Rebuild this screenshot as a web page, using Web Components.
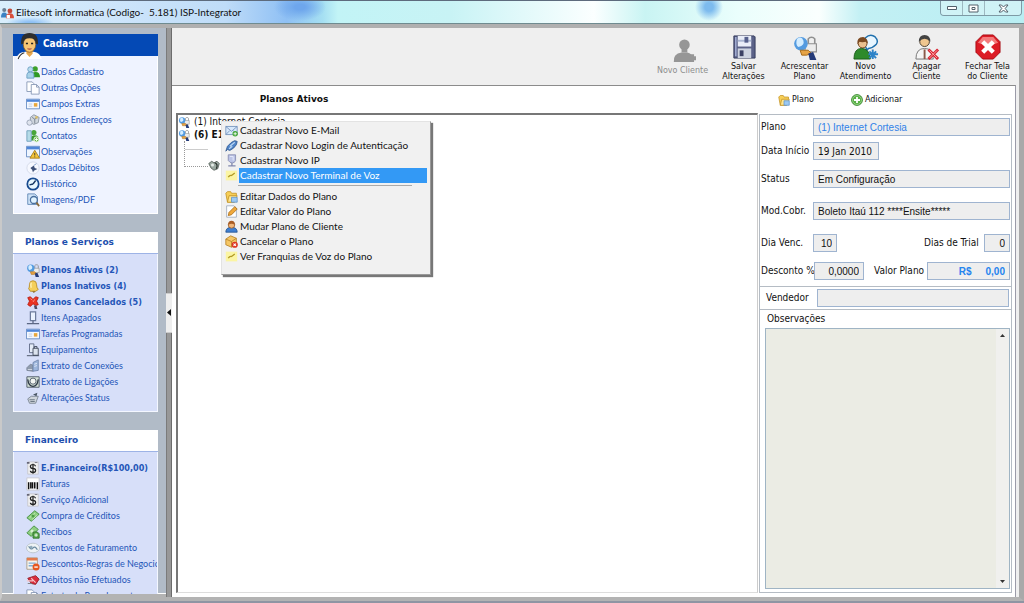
<!DOCTYPE html>
<html lang="pt-BR">
<head>
<meta charset="utf-8">
<title>ISP-Integrator</title>
<style>
html, body { margin: 0; height: 100%; }
body {
  --ui: "DejaVu Sans Condensed", "DejaVu Sans", sans-serif;
  --wide: "DejaVu Sans", sans-serif;
  --menu: Lato, "Liberation Sans", sans-serif;
  --nav: Lato, "Liberation Sans", sans-serif;
  font: 9px/16px var(--ui);
  color: #111;
  overflow: hidden;
}
</style>
</head>
<body>
<app-window heading="Elitesoft informatica (Codigo-&nbsp; 5.181) ISP-Integrator">
  <nav-sidebar slot="sidebar">
    <side-panel heading="Cadastro" primary>
      <nav-item icon="people">Dados Cadastro</nav-item>
      <nav-item icon="pages">Outras Opções</nav-item>
      <nav-item icon="form">Campos Extras</nav-item>
      <nav-item icon="address">Outros Endereços</nav-item>
      <nav-item icon="contacts">Contatos</nav-item>
      <nav-item icon="notes">Observações</nav-item>
      <nav-item icon="debit">Dados Débitos</nav-item>
      <nav-item icon="clock">Histórico</nav-item>
      <nav-item icon="search">Imagens/PDF</nav-item>
    </side-panel>
    <side-panel heading="Planos e Serviços">
      <nav-item icon="plan" bold>Planos Ativos (2)</nav-item>
      <nav-item icon="bell" bold>Planos Inativos (4)</nav-item>
      <nav-item icon="cancelled" bold>Planos Cancelados (5)</nav-item>
      <nav-item icon="device">Itens Apagados</nav-item>
      <nav-item icon="form">Tarefas Programadas</nav-item>
      <nav-item icon="equipment">Equipamentos</nav-item>
      <nav-item icon="connections">Extrato de Conexões</nav-item>
      <nav-item icon="calls">Extrato de Ligações</nav-item>
      <nav-item icon="status">Alterações Status</nav-item>
    </side-panel>
    <side-panel heading="Financeiro">
      <nav-item icon="dollar" bold>E.Financeiro(R$100,00)</nav-item>
      <nav-item icon="barcode">Faturas</nav-item>
      <nav-item icon="dollar">Serviço Adicional</nav-item>
      <nav-item icon="money">Compra de Créditos</nav-item>
      <nav-item icon="receipt">Recibos</nav-item>
      <nav-item icon="events">Eventos de Faturamento</nav-item>
      <nav-item icon="discount">Descontos-Regras de Negocio</nav-item>
      <nav-item icon="unpaid">Débitos não Efetuados</nav-item>
      <nav-item icon="pages">Extrato do Parcelamento</nav-item>
    </side-panel>
  </nav-sidebar>

  <tool-bar slot="toolbar">
    <tool-button icon="newclient" disabled>Novo Cliente</tool-button>
    <tool-button icon="floppy">Salvar<br>Alterações</tool-button>
    <tool-button icon="plan">Acrescentar<br>Plano</tool-button>
    <tool-button icon="support">Novo<br>Atendimento</tool-button>
    <tool-button icon="delclient">Apagar<br>Cliente</tool-button>
    <tool-button icon="stop">Fechar Tela<br>do Cliente</tool-button>
  </tool-bar>

  <plan-tree slot="content" heading="Planos Ativos">
    <tree-node icon="plan">(1) Internet Cortesia</tree-node>
    <tree-node icon="plan" bold>(6) E1</tree-node>
    <context-menu slot="menu">
      <menu-item icon="mail">Cadastrar Novo E-Mail</menu-item>
      <menu-item icon="plug">Cadastrar Novo Login de Autenticação</menu-item>
      <menu-item icon="ip">Cadastrar Novo IP</menu-item>
      <menu-item icon="note" selected>Cadastrar Novo Terminal de Voz</menu-item>
      <menu-divider></menu-divider>
      <menu-item icon="folder">Editar Dados do Plano</menu-item>
      <menu-item icon="pencil">Editar Valor do Plano</menu-item>
      <menu-item icon="user">Mudar Plano de Cliente</menu-item>
      <menu-item icon="box">Cancelar o Plano</menu-item>
      <menu-item icon="note">Ver Franquias de Voz do Plano</menu-item>
    </context-menu>
  </plan-tree>

  <plan-details slot="details"></plan-details>
</app-window>

<script>
const ICONS = {
  app: `<circle cx="4" cy="5" r="2.500" fill="#6a7f95"/><path d="M0 14q0-6 4-6t4 6z" fill="#3b82c4"/><circle cx="11" cy="6" r="3" fill="#c34a3a"/><path d="M6 15q0-6 5-6t5 6z" fill="#d9503c"/><path d="M7 11h4v4H7z" fill="#fff"/>`,
  people: `<circle cx="10.500" cy="4.500" r="3" fill="#3ca02a"/><path d="M6 14q0-6 5-6t5 6z" fill="#2f9a22"/><circle cx="5" cy="5" r="3" fill="#b9dcec" stroke="#6b9fc4"/><path d="M1 15V11q0-3 4-3t4 3v4z" fill="#a8d2e8" stroke="#6b9fc4"/>`,
  pages: `<path d="M1 1h6l2 2v9H1z" fill="#fff" stroke="#8797b5"/><path d="M6 4h6l3 3v8H6z" fill="#fdfdff" stroke="#8797b5"/><path d="M12 4v3h3" fill="none" stroke="#8797b5"/>`,
  form: `<path d="M.5 2.500h15v11H.5z" fill="#f4f8ff" stroke="#5f86bf"/><path d="M1 3h14v2.500H1z" fill="#4f86d8"/><path d="M3 8h4M3 10.500h4" stroke="#b8c8e0"/><path d="M9 7h4v4H9z" fill="#e9a73b"/>`,
  address: `<path d="M5 5l4-3 6 3-1 6-5 2-4-2z" fill="#cfd6de" stroke="#8a949f"/><path d="M7 5l3 2 3-2M10 7v5" fill="none" stroke="#727d88"/><circle cx="4" cy="11" r="3" fill="#dfe4ee" stroke="#98a2b5"/><circle cx="12" cy="5" r="1.500" fill="#d9bd6a"/>`,
  contacts: `<circle cx="9" cy="4" r="3" fill="#48a63a"/><path d="M5 13q0-6 5-6t5 6z" fill="#3b9a2c"/><path d="M1 2h5v12H1z" fill="#b5dbe8" stroke="#6d9fba"/><circle cx="12" cy="12" r="3" fill="#67b94c" stroke="#fff"/><path d="M12 10v4M10 12h4" stroke="#fff"/>`,
  notes: `<path d="M.5 1.500h15v12H.5z" fill="#eef5ff" stroke="#5f86bf"/><path d="M1 2h14v3H1z" fill="#4f86d8"/><path d="M10 6l5.500 9h-11z" fill="#f6c63a" stroke="#a77b18"/><path d="M10 9v3M10 13v1" stroke="#333"/>`,
  debit: `<circle cx="8" cy="8" r="7" fill="#f6f8ff" stroke="#d3d9e8"/><path d="M5 8l4-3 1 3 3 1-4 2-1 2-1-3z" fill="#3d5078"/><path d="M9 5l3-2" stroke="#7c9ccb"/>`,
  clock: `<circle cx="8" cy="8" r="6.500" fill="#e9f8ff" stroke="#174a8f" stroke-width="2"/><path d="M8 8L11 4M8 8L4 9" stroke="#163763" stroke-width="1.600"/>`,
  search: `<path d="M2 1h8l3 3v9H2z" fill="#cfe3f8" stroke="#5c83b4"/><circle cx="9" cy="8" r="4" fill="#dff2ff" stroke="#4a6f9e" stroke-width="1.500"/><path d="M12 11l3 4" stroke="#8a6a3a" stroke-width="2"/>`,
  plan: `<path d="M10 6V3a2.500 2.500 0 0 1 4 0v4" fill="none" stroke="#909090"/><path d="M8 6h7v5H8z" fill="#ececec" stroke="#8d8d8d" stroke-width=".7"/><circle cx="5.500" cy="6" r="4.200" fill="#549be0"/><path d="M3 3q3-2 4 1t-3 4q-2-1-1-5z" fill="#d4edff"/><path d="M5 10l5 0 2 2-3 1h-3z" fill="#e6a345" stroke="#a66b1b" stroke-width=".6"/><path d="M10 12l3-1 2 5h-4z" fill="#243a78"/>`,
  bell: `<path d="M3 11q1-1 1-5a4 4 0 0 1 8 0q0 4 2 6l-3 2H5z" fill="#f4cf5a" stroke="#b98d25"/><path d="M6 4q-1 3 0 6" stroke="#fff2b8" fill="none" stroke-width="1.500"/><path d="M7 14l4 0-2 2z" fill="#8b6b2a"/>`,
  cancelled: `<path d="M2 3l3-1 3 3 3-3 3 1-2 4 2 4-3 1-3-2-3 3-3-2 2-4z" fill="#ea3323" stroke="#b81d10"/><path d="M5 4l2 2M10 5l-2 3" stroke="#ff9a8a"/><path d="M9 12l3 0 1 4h-3z" fill="#4d4d66"/>`,
  device: `<path d="M5 1h6v10H5z" fill="#eaf2ff" stroke="#6c7b9c" stroke-width="1.400"/><path d="M8 11v3M1 14.500h14" stroke="#5c6784" stroke-width="1.500"/>`,
  equipment: `<path d="M4 1h5v10H4z" fill="#e5ecf8" stroke="#5c6784"/><path d="M8 6h6v8H8z" fill="#dce3ee" stroke="#3e4759"/><path d="M9.500 6V4h3v2M1 14.500h14" stroke="#3e4759" fill="none"/>`,
  connections: `<path d="M1 10l4-4 3 1v7l-7-1z" fill="#8f9bad" stroke="#7b8799"/><path d="M8 4l6-3v12l-6 1z" fill="#9db6dc" stroke="#6f86ab"/><path d="M9.500 6l3-1M9.500 8.500l3-1" stroke="#e3ecf8"/><path d="M2 12l5 0" stroke="#d7dde6"/>`,
  calls: `<path d="M1 2h14v12H1z" fill="#d5e2d8" stroke="#4a5664"/><circle cx="8" cy="7" r="3.500" fill="#f2f6f2" stroke="#4a5664"/><path d="M2 5q1 8 6 8t6-8" stroke="#2d3845" fill="none" stroke-width="1.500"/>`,
  status: `<path d="M2 9l4-3h8l-3 8H4z" fill="#cfd5dc" stroke="#788390"/><path d="M8 4l5-2-1 4z" fill="#4a5664"/><path d="M4 10h6M5 12h5" stroke="#5f6b78"/>`,
  dollar: `<path d="M2 1h12v14H2z" fill="#f1f1f1" stroke="#c5c5cb"/><path d="M11 6q-1-2-3-2-3 0-3 2.200T8 8.500t3 2.300T8 13q-3 0-3-2M8 3v11.500" stroke="#222" fill="none" stroke-width="1.400"/><path d="M1 1h3v2H1zM10 1h3v1h-3z" fill="#667"/>`,
  barcode: `<path d="M1 1h14v14H1z" fill="#fff" stroke="#c8c8d0"/><path d="M3 6v8M5.500 6v7M7.500 6v7M10 6v7M13 6v8" stroke="#111" stroke-width="1.700"/>`,
  money: `<path d="M1 10L10 2l5 4-9 8z" fill="#8fcf82" stroke="#3f8d3a"/><path d="M4 10l6-5M7 12l6-5" stroke="#d2f0c8"/><circle cx="8" cy="8" r="1.800" fill="#4e9f46"/>`,
  receipt: `<path d="M1 9L9 1l5 4-8 8z" fill="#8fcf82" stroke="#3f8d3a"/><circle cx="7" cy="7" r="1.800" fill="#d8f2d0"/><path d="M8 8h5l2 2v5H8z" fill="#5aaa4d" stroke="#2f6e29"/><path d="M11.500 9.500v4M9.500 11.500h4" stroke="#fff"/>`,
  events: `<ellipse cx="8" cy="8" rx="7.500" ry="5.500" fill="#eef3f5" stroke="#b9c3cb"/><path d="M3 6q3 5 5 2t5 2" stroke="#6b8ba1" fill="none" stroke-width="1.400"/><circle cx="6" cy="7" r="1.500" fill="#8fa9b9"/>`,
  discount: `<path d="M1 1h12v13H1z" fill="#f6f3ec" stroke="#a89a85"/><path d="M1 1h12v3H1z" fill="#e37a4c"/><path d="M3 7h8M3 10h5" stroke="#7faed5" stroke-width="1.500"/><circle cx="11.500" cy="11.500" r="4" fill="#e5561f"/><path d="M9.500 11.500h4" stroke="#fff" stroke-width="1.500"/>`,
  unpaid: `<path d="M2 6l9-3 4 4-4 6-5-1z" fill="#d92c3c" stroke="#91202a"/><path d="M1 9h7M6 6l5 5" stroke="#f6c4c8" stroke-width="1.300"/><path d="M2 12h5" stroke="#777"/>`,
  newclient: `<circle cx="15" cy="7" r="5.500" fill="#969696"/><path d="M12 11h6v4h-6z" fill="#969696"/><path d="M4 25q-1-9 8-10h6q5 1 6 6v4z" fill="#969696"/><path d="M23 17v8M18 21h10" stroke="#969696" stroke-width="4"/>`,
  floppy: `<path d="M3 2h21l1 1v22H3z" fill="#5b6288" stroke="#33395c"/><path d="M7 2h14v11H7z" fill="#e9edf8"/><path d="M7 7h14" stroke="#aab6d2" stroke-width="2"/><path d="M14 3h4v6h-4z" fill="#56608c"/><path d="M7 15h14v10H7z" fill="#cdd3e0"/><path d="M9 17h4v6H9z" fill="#3b4164"/><path d="M5 3v20" stroke="#a8b2d8" stroke-width="1.500"/>`,
  support: `<path d="M14 15q-5-6-1-11 5-5 10-1 4 4 1 8-4 4-8 4l-4 5z" fill="#e8f6ff" stroke="#1f70ad" stroke-width="1.500"/><circle cx="10" cy="10" r="4.500" fill="#eac08e" stroke="#74441c"/><path d="M4.500 11q-1-8 6-8 5 1 5 7l-2-2q-4 1-7 0z" fill="#7b4a22"/><path d="M1 26q0-11 8-11t9 11z" fill="#2e8a2b" stroke="#1a5c19"/><path d="M20.500 16v10M16 21h10M17 18l7 7M24 18l-7 7" stroke="#2d83c8" stroke-width="2"/>`,
  delclient: `<circle cx="11" cy="8" r="5" fill="#efc68f" stroke="#4c4030"/><path d="M5 8q0-7 6-7t6 7q-3-3-6-3t-6 3z" fill="#434343"/><path d="M2 26q0-11 9-11t9 11z" fill="#f5f5f5" stroke="#777"/><path d="M11 16v10" stroke="#8b5a4a" stroke-width="2"/><path d="M15 16l10 10M25 16L15 26" stroke="#d72330" stroke-width="3"/><path d="M16 17l8 8M24 17l-8 8" stroke="#ffa7a9"/>`,
  stop: `<path d="M8 1h11l7 7v11l-7 7H8l-7-7V8z" fill="#dc1c26" stroke="#a90c14"/><path d="M3 9l5-6h11l5 6q-10 5-21 0z" fill="#f47b7c"/><path d="M8 8l11 11M19 8L8 19" stroke="#fff" stroke-width="4.500"/>`,
  avatar: `<path d="M1 26q2-7 9-7h8q6 1 8 7z" fill="#fff"/><path d="M3 26q2-5 6-6" stroke="#333" fill="none"/><path d="M11 17h6v4l-3 3-3-3z" fill="#e9a94f"/><ellipse cx="14" cy="12" rx="6" ry="7.500" fill="#f7c574" stroke="#8a5a1c" stroke-width=".7"/><path d="M6 12q-1-11 8-11t8 11l-2-1q0-5-6-5t-6 5z" fill="#2e2e2e"/><path d="M10.500 11h2M15.500 11h2" stroke="#222" stroke-width="1.500"/><path d="M12 16q2 1 4 0" stroke="#a44" fill="none"/>`,
  mail: `<path d="M1 3h14v10H1z" fill="#d8e9fb" stroke="#6c8cb8"/><path d="M1 3l7 6 7-6M1 13l5-5M15 13l-5-5" stroke="#6c8cb8" fill="none"/><circle cx="12.500" cy="12" r="3.300" fill="#47a83b"/><path d="M12.500 10v4M10.500 12h4" stroke="#fff"/>`,
  plug: `<path d="M1 15l2-6q5-6 9-7l3 1-1 4q-3 5-8 7l-3-1z" fill="#4f84c8" stroke="#2d568f"/><path d="M6 9l6-5M5 12l4-3" stroke="#b9d5f3" stroke-width="1.500"/>`,
  ip: `<path d="M4 1h9v7q-1 3-4 3T4 8z" fill="#bcc4e6" stroke="#8188ae"/><path d="M6 3h4v5" stroke="#eef1ff" fill="none"/><path d="M8.500 11v3M4 14.500h9" stroke="#8188ae" stroke-width="1.600"/>`,
  note: `<path d="M1 2h14v12H1z" fill="#fbf5a3"/><path d="M4 10q2-3 4-2l4-3" stroke="#b29a24" fill="none" stroke-width="1.600"/>`,
  folder: `<path d="M1 4l2-2h4l1 2h6v3l-3 8H3z" fill="#f7cf57" stroke="#c39325"/><path d="M3 15l2-8h10l-3 8z" fill="#ffe590" stroke="#c39325"/><path d="M8 9h7v6H8z" fill="#9cc9f3" stroke="#5f94cb"/>`,
  pencil: `<path d="M2 1h9l3 3v11H2z" fill="#fff" stroke="#9aa8bc"/><path d="M4 13l1-4 7-7 3 3-7 7z" fill="#f0a93b" stroke="#a96b16"/>`,
  user: `<path d="M1 15q0-6 7-6t7 6z" fill="#3f7fd0" stroke="#24528f"/><circle cx="8" cy="6" r="4" fill="#f0b67a" stroke="#94592a"/><path d="M4 6q0-5 4-5t4 5q-4-3-8 0z" fill="#a95d26"/>`,
  box: `<path d="M1 5l6-4 7 3v8l-6 3-7-3z" fill="#f6c765" stroke="#b57f22"/><path d="M1 5l7 3 6-4M8 8v7" stroke="#b57f22" fill="none"/><circle cx="12" cy="12" r="3.800" fill="#dd3522"/><path d="M10.500 10.500l3 3M13.500 10.500l-3 3" stroke="#fff" stroke-width="1.300"/>`,
  add: `<circle cx="8" cy="8" r="7.300" fill="#57b044" stroke="#2e7d24"/><circle cx="8" cy="8" r="6" fill="none" stroke="#b9e4ac" stroke-width=".8"/><path d="M8 4v8M4 8h8" stroke="#fff" stroke-width="2.400"/>`,
  phone: `<path d="M1 6l4-3 3 2 4-2 3 3-2 7-5 2-4-3z" fill="#9aa8a0" stroke="#4a544e"/><circle cx="6" cy="8" r="2" fill="#e6ece8"/><path d="M9 5q5 2 2 8" stroke="#29302c" fill="none" stroke-width="1.600"/>`
};
const BIG = new Set(["newclient", "floppy", "support", "delclient", "stop", "avatar"]);

/** Base class: attaches an open shadow root holding the element's styles and markup. */
class UIElement extends HTMLElement {
  connectedCallback() {
    if (this.shadowRoot) return;
    this.attachShadow({ mode: "open" }).innerHTML =
      `<style>*{box-sizing:border-box}:host{box-sizing:border-box}${this.styles()}</style>${this.markup()}`;
  }
  attr(name) { return this.getAttribute(name) || ""; }
  styles() { return ""; }
  markup() { return "<slot></slot>"; }
}
const define = (name, styles, markup) => customElements.define(name, class extends UIElement {
  styles() { return styles; }
  markup() { return markup ? markup(this) : "<slot></slot>"; }
});

define("ui-icon",
  `:host{display:block;flex:none;width:14px;height:14px} svg{display:block;width:100%;height:100%}`,
  el => { const n = el.attr("name"), s = BIG.has(n) ? 27 : 16;
    return `<svg viewBox="0 0 ${s} ${s}" aria-hidden="true">${ICONS[n] || ""}</svg>`; });

define("app-window", `
  :host{display:grid;grid-template-rows:24px minmax(0,1fr);height:100vh;background:#8f95a3}
  header{display:flex;align-items:center;justify-content:space-between;gap:4px;padding-left:1px;
    border-top:1px solid #5d6b7d;border-bottom:1px solid #6f8b90;
    background:
      radial-gradient(ellipse 26px 14px at 300px 6px,#6ea6ec 20%,transparent),
      radial-gradient(ellipse 14px 14px at 709px 6px,#7dbbee 30%,transparent),
      radial-gradient(ellipse 24px 6px at 30px 22px,#8ec0f5 20%,transparent),
      linear-gradient(90deg,#d9eefc 0,#cfe6fb 10%,#bfdcf8 22%,#8fc0f4 28%,#a5dff2 31.500%,#c2f4f6 33%,#c8f3f5 44%,#fbffff 58%,#c9f4f3 63%,#eafefc 72%,#fafffe 80%,#c3f0f4 84%,#b9eef3 100%)}
  .title{display:flex;align-items:center;gap:2px;flex:1}
  .title ui-icon{width:13px;height:13px}
  h1{margin:0;font:10px/16px var(--menu);color:#111;white-space:pre}
  .controls{display:flex;align-self:flex-start;height:15px;margin-right:2px;border:1px solid #7e9aa5;border-top:0;border-radius:0 0 4px 4px;overflow:hidden}
  .controls button{display:grid;place-items:center;width:22px;padding:0;border:0;border-right:1px solid #9db8c0;background:#d9f4f7aa}
  .controls button:last-child{width:36px;border:0}
  .frame{display:grid;grid-template-columns:164px 6px minmax(0,1fr);border:solid;border-width:4px 5px 4px 2px;
    border-color:#b0b0b0 #a9a9a9 #b3b3b3 #c9c9c9;margin-bottom:2px;min-height:0}
  .split{display:flex;flex-direction:column;justify-content:center;background:linear-gradient(90deg,#7b7b7b 0 1px,#989898 1px 5px,#6c6c6c 5px)}
  .split button{display:grid;place-items:center;height:40px;width:6px;padding:0;border:1px solid #ccc;border-width:1px 0;background:#eee}
  main{display:grid;grid-template-rows:55px minmax(0,1fr);background:#efefef;min-height:0;padding-top:2px}
  .work{display:grid;grid-template-columns:minmax(0,1fr) 257px;background:#fff;border-top:1px solid #8b8b8b;margin-right:3px;border-right:1px solid #9b9ba8;min-height:0}
  ::slotted(*){min-height:0;min-width:0}
  `, el => `
  <header><div class="title"><ui-icon name="app"></ui-icon><h1>${el.attr("heading")}</h1></div>
    <div class="controls">
      <button aria-label="Minimizar"><svg width="12" height="6"><path d="M1.500 1.500h9v3h-9z" fill="#fff" stroke="#52616b"/></svg></button>
      <button aria-label="Maximizar"><svg width="11" height="9"><path d="M1 1h9v7H1z" fill="#fff" stroke="#52616b"/><path d="M4 3.500h3v2H4z" fill="#fff" stroke="#52616b"/></svg></button>
      <button aria-label="Fechar"><svg width="11" height="9"><path d="M1 1h2.500l2 2 2-2H10L7.200 4.500 10 8H7.500l-2-2-2 2H1l2.800-3.500z" fill="#fff" stroke="#52616b"/></svg></button>
    </div></header>
  <div class="frame">
    <slot name="sidebar"></slot>
    <div class="split"><button aria-label="Recolher"><svg width="4" height="7"><path d="M4 0v7L0 3.500z" fill="#111"/></svg></button></div>
    <main><slot name="toolbar"></slot><div class="work"><slot name="content"></slot><slot name="details"></slot></div></main>
  </div>`);

define("nav-sidebar", `
  :host{display:block;background:#b1bbc7;padding:6px 8px 0 11px;overflow:hidden;border-bottom:3px solid #b3b3b3;box-shadow:inset 0 -1px #fff}
  nav{display:flex;flex-direction:column;gap:18px}`, () => `<nav><slot></slot></nav>`);

define("side-panel", `
  :host{display:block}
  h2{display:flex;margin:0;height:22px;padding-left:12px;font:bold 9px/20px var(--wide);color:#1d4fae;background:#fff;border-bottom:1px solid #9db3e6}
  div{padding:8px 0 5px 12px;background:#d7dff9;border:solid #f4f7ff;border-width:0 1px 1px;white-space:nowrap;overflow:hidden}
  :host([primary]) h2{background:#0449b5;color:#fff;border-color:#0449b5;padding-left:2px;font:bold 10px/20px var(--ui)}
  :host([primary]) div{background:#eff3ff;border-color:#fff}
  h2 ui-icon{width:28px;height:28px;margin-top:-2px}`,
  el => `<h2>${el.hasAttribute("primary") ? '<ui-icon name="avatar"></ui-icon>' : ""}${el.attr("heading")}</h2><div><slot></slot></div>`);

define("nav-item", `
  :host{display:block;height:16px}
  a{display:flex;align-items:center;gap:1px;color:#2456b8;text-decoration:none;font:9px/16px var(--nav)}
  :host([bold]) a{font-weight:bold;font-family:var(--ui)}`,
  el => `<a href="#"><ui-icon name="${el.attr("icon")}"></ui-icon><span><slot></slot></span></a>`);

define("tool-bar", `:host{display:flex;justify-content:flex-end;padding-right:1px}`);
define("tool-button", `
  :host{display:block;width:61px}
  button{display:flex;flex-direction:column;align-items:center;gap:2px;width:100%;padding:4px 0 0;border:0;background:none;color:#111;font:8px/10px var(--wide);white-space:nowrap}
  ui-icon{width:26px;height:26px}
  :host([disabled]) button{color:#8d8d8d;padding-top:8px}`,
  el => `<button ${el.hasAttribute("disabled") ? "disabled" : ""}><ui-icon name="${el.attr("icon")}"></ui-icon><span><slot></slot></span></button>`);

define("plan-tree", `
  :host{display:grid;grid-template-rows:27px minmax(0,1fr);padding:0 0 4px 4px;background:#fff}
  h2{margin:0;width:236px;text-align:center;font:bold 9px/27px var(--wide);color:#111}
  .tree{position:relative;border:1px solid #ccc;border-width:2px 1px 1px 2px;border-color:#777 #ccc #ddd #777}
  .branch{display:flex;margin:0 0 0 6px;width:36px}
  .lines{width:24px;height:26px;border:dotted #999;border-width:0 0 1px 1px;background:linear-gradient(#ccc,#ccc) 0 8px/24px 1px no-repeat}
  .branch ui-icon{margin-top:18px;width:12px;height:12px}
  ::slotted([slot=menu]){position:absolute;left:43px;top:6px}`,
  el => `<h2>${el.attr("heading")}</h2>
  <div class="tree"><slot></slot><div class="branch"><div class="lines"></div><ui-icon name="phone"></ui-icon></div><slot name="menu"></slot></div>`);

define("tree-node", `
  :host{display:flex;align-items:center;gap:4px;height:13px;font:10px/13px var(--ui)}
  :host([bold]){font-weight:bold} ui-icon{width:12px;height:12px}`,
  el => `<ui-icon name="${el.attr("icon")}"></ui-icon><span><slot></slot></span>`);

define("context-menu", `
  :host{display:block;width:210px;height:154px;padding:1px 2px;background:#f1f1f1;border:1px solid #ddd;border-color:#e3e3e3 #999 #999 #e3e3e3;box-shadow:2px 2px 1px #777}`,
  () => `<div role="menu"><slot></slot></div>`);
define("menu-item", `
  :host{display:block}
  button{display:flex;align-items:center;width:203px;height:15px;padding:0;border:0;background:none;font:10px/15px var(--menu);color:#111;text-align:left;white-space:nowrap}
  span{flex:1;padding-left:1px} ui-icon{width:13px;height:13px;margin:0 1px}
  :host([selected]) span{background:#3399f5;color:#fff}`,
  el => `<button role="menuitem"><ui-icon name="${el.attr("icon")}"></ui-icon><span><slot></slot></span></button>`);
define("menu-divider", `:host{display:block;height:4px;width:174px;margin:2px 0 0 14px;border-top:1px solid #aaa}`, () => "");

define("mini-button", `
  button{display:flex;align-items:center;gap:2px;border:0;padding:0;background:none;font:8px/12px var(--wide);color:#111}
  ui-icon{width:12px;height:12px}`,
  el => `<button><ui-icon name="${el.attr("icon")}"></ui-icon><slot></slot></button>`);

define("text-field", `
  :host{display:grid;grid-template-columns:var(--label,52px) var(--field,minmax(0,1fr));align-items:center;height:18px}
  label{font:10px/12px var(--ui);white-space:nowrap;color:#111}
  input{width:100%;min-width:0;height:18px;margin:0;padding:0 4px;border:1px solid #9fb4d0;border-radius:0;background:#eee;color:#111;font:10px/14px "Liberation Sans",sans-serif}
  :host([wide]) input{font-family:var(--ui)}
  :host([link]) input{color:#3182e8}
  :host([right]) input{text-align:right}
  :host([strong]) input{color:#2484ee;font-weight:bold;white-space:pre}`,
  el => `<label for="f">${el.attr("label")}</label><input id="f" value="${el.attr("value")}" readonly>`);

define("plan-details", `
  :host{display:grid;grid-template-rows:28px minmax(0,1fr);padding:0 3px 4px 1px;background:#fff}
  .actions{display:flex;align-items:center;gap:37px;padding-left:19px}
  .box{display:flex;flex-direction:column;border:1px solid #b5bcc4;min-height:0}
  .grid{display:grid;grid-template-rows:24px 28px 32px 32px 28px 24px;padding:3px 1px 0}
  .pair{display:flex;justify-content:space-between}
  .short{--field:66px}.day{--field:24px}.trial{--label:60px;--field:26px}
  .disc{--label:53px;--field:50px}.val{--label:53px;--field:83px}
  .seller{border:solid #b5bcc4;border-width:1px 0;padding:2px 2px 2px 6px;--label:51px}
  h3{margin:0;padding-left:7px;font:10px/18px var(--ui)}
  .memo{flex:1;display:flex;min-height:0;margin:0 1px 3px 5px;border:1px solid #9fb4c4;background:#ebece4}
  textarea{flex:1;border:0;padding:2px;resize:none;background:transparent;outline:0;margin:0}
  .bar{display:flex;flex-direction:column;justify-content:space-between;align-items:center;width:13px;padding:5px 0;background:#f0f0ee}
  `, () => `
  <div class="actions"><mini-button icon="folder">Plano</mini-button><mini-button icon="add">Adicionar</mini-button></div>
  <div class="box">
    <div class="grid">
      <text-field label="Plano" value="(1) Internet Cortesia" link></text-field>
      <text-field class="short" label="Data Início" value="19 Jan 2010" wide></text-field>
      <text-field label="Status" value="Em Configuração"></text-field>
      <text-field label="Mod.Cobr." value="Boleto Itaú 112 ****Ensite*****"></text-field>
      <div class="pair"><text-field class="day" label="Dia Venc." value="10" right></text-field><text-field class="trial" label="Dias de Trial" value="0" right></text-field></div>
      <div class="pair"><text-field class="disc" label="Desconto %" value="0,0000" right></text-field><text-field class="val" label="Valor Plano" value="R$&nbsp;&nbsp;&nbsp;&nbsp; 0,00" right strong></text-field></div>
    </div>
    <div class="seller"><text-field label="Vendedor" value=""></text-field></div>
    <h3 id="obs">Observações</h3>
    <div class="memo"><textarea aria-labelledby="obs"></textarea>
      <div class="bar"><svg width="5" height="3"><path d="M0 3h5L2.500 0z" fill="#333"/></svg><svg width="5" height="3"><path d="M0 0h5L2.500 3z" fill="#333"/></svg></div></div>
  </div>`);
</script>
</body>
</html>
